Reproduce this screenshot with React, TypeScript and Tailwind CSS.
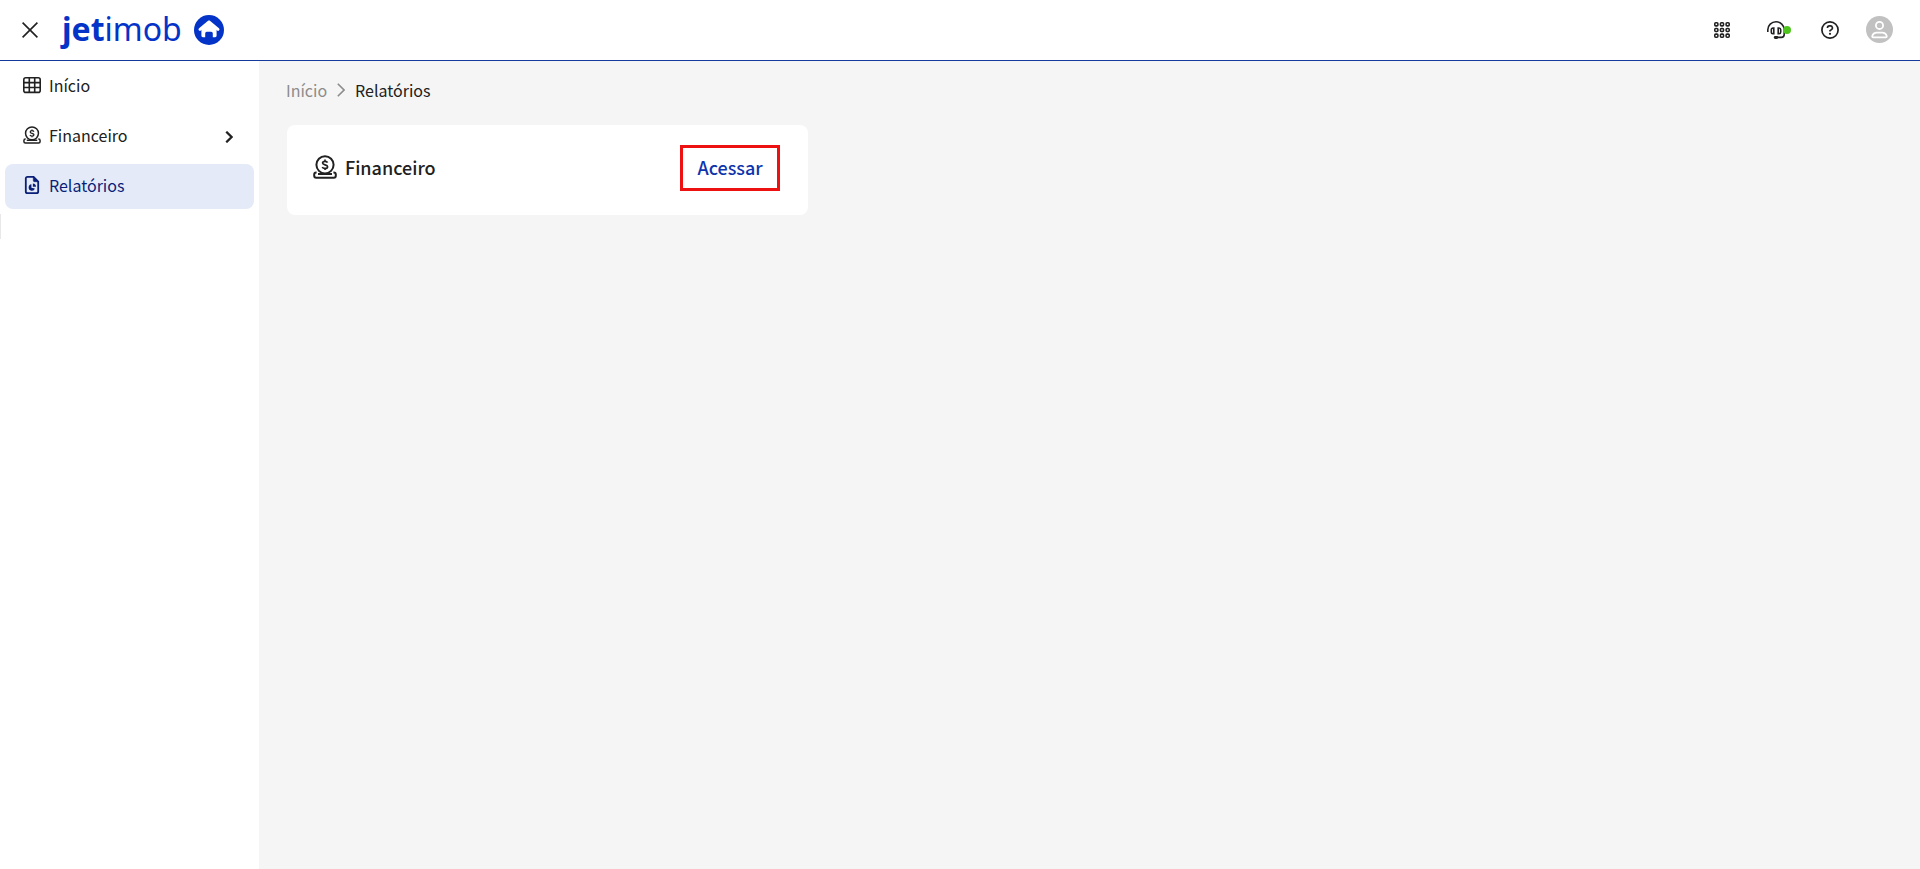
import type { ReactNode } from 'react';

interface IconProps {
  className?: string;
}

function CloseIcon({ className }: IconProps) {
  return (
    <svg viewBox="0 0 16 16" className={className} fill="none" stroke="currentColor" strokeWidth="1.6">
      <path d="M.6.6l14.8 14.8M15.4.6L.6 15.4" />
    </svg>
  );
}

function HouseBadge({ className }: IconProps) {
  return (
    <svg viewBox="0 0 30 30" className={className}>
      <circle cx="15" cy="15" r="15" fill="#0433c8" />
      <path
        d="M15 7L6 14.4M15 7l9 7.4"
        stroke="#fff"
        strokeWidth="3"
        strokeLinecap="round"
        strokeLinejoin="round"
      />
      <path
        d="M15 7l7.6 6.5v7.3q0 1.4-1.4 1.4h-2.4v-3.8q0-1.6-1.6-1.6h-4.4q-1.6 0-1.6 1.6v3.8H8.800q-1.400 0-1.400-1.400V13.500z"
        fill="#fff"
      />
    </svg>
  );
}

function AppsIcon({ className }: IconProps) {
  const steps = [2.4, 8.2, 14];
  return (
    <svg viewBox="0 0 16.4 16.4" className={className} fill="none" stroke="currentColor" strokeWidth="1.6">
      {steps.map((y) =>
        steps.map((x) => <rect key={`${x}-${y}`} x={x - 1.6} y={y - 1.6} width="3.2" height="3.2" rx="1" />)
      )}
    </svg>
  );
}

function HeadsetIcon({ className }: IconProps) {
  return (
    <svg viewBox="0 0 18 18" className={className} fill="none" stroke="currentColor" strokeWidth="1.6">
      <path d="M.8 11V8.8a8.2 8 0 0 1 16.4 0v4.8a2.8 2.8 0 0 1-2.8 2.8H9" />
      <path d="M6.8 7v5.8H6a1.7 1.7 0 0 1-1.7-1.7V8.7A1.7 1.7 0 0 1 6 7zM11.2 7v5.8h.8a1.7 1.7 0 0 0 1.7-1.7V8.7A1.7 1.7 0 0 0 12 7z" />
      <rect x="6.8" y="14.9" width="4.4" height="3" rx="1.4" fill="currentColor" stroke="none" />
    </svg>
  );
}

function HelpIcon({ className }: IconProps) {
  return (
    <svg viewBox="0 0 18 18" className={className} fill="none" stroke="currentColor" strokeWidth="1.7">
      <circle cx="9" cy="9" r="8.1" />
      <path d="M6.5 7V6.8a1.9 1.9 0 0 1 1.9-1.9h1.1a2 2 0 0 1 1 3.7L9 9.6v.9" />
      <circle cx="9" cy="12.8" r="1.1" fill="currentColor" stroke="none" />
    </svg>
  );
}

function AvatarIcon({ className }: IconProps) {
  return (
    <svg viewBox="0 0 27 27" className={className}>
      <circle cx="13.5" cy="13.5" r="13.5" fill="#c1c1c1" />
      <g fill="none" stroke="#fff" strokeWidth="1.8">
        <circle cx="13.5" cy="9.4" r="3.6" />
        <path d="M7.3 21.3h12.4c.8 0 1.2-.5 1-1.3-.6-2.1-2.4-3.4-4.6-3.4h-5.2c-2.2 0-4 1.3-4.6 3.4-.2.8.2 1.3 1 1.3z" />
      </g>
    </svg>
  );
}

function TableIcon({ className }: IconProps) {
  return (
    <svg viewBox="0 0 18 18" className={className} fill="none" stroke="currentColor" strokeWidth="1.6">
      <rect x=".8" y="1.8" width="16.4" height="14.6" rx="2" />
      <path d="M.8 6.6h16.4M.8 11.5h16.4M6.3 1.8v14.6M11.7 1.8v14.6" />
    </svg>
  );
}

function CoinIcon({ className }: IconProps) {
  return (
    <svg viewBox="0 0 24 24" className={className} fill="none" stroke="currentColor" strokeWidth="2">
      <circle cx="12" cy="9.8" r="8.6" />
      <path d="M3.6 17.4h-.4c-1.2 0-2 .9-2 2.1v1.3c0 1.2.8 2 2 2h17.6c1.2 0 2-.8 2-2v-1.3c0-1.2-.8-2.1-2-2.1h-.4M5 18.9h14" />
      <path
        d="M14.5 7.6c-.4-1-1.3-1.3-2.5-1.3-1.4 0-2.4.6-2.4 1.7 0 2.4 5 1.2 5 3.7 0 1.1-1 1.7-2.6 1.7-1.4 0-2.3-.4-2.7-1.4M12 4.6v1.7M12 13.4v1.7"
        strokeWidth="1.7"
      />
    </svg>
  );
}

function ReportIcon({ className }: IconProps) {
  return (
    <svg viewBox="0 0 18 18" className={className} fill="none" stroke="currentColor" strokeWidth="1.8">
      <path d="M10.6.9H4.5c-1 0-1.7.7-1.7 1.7v12.8c0 1 .7 1.7 1.7 1.7h9c1 0 1.7-.7 1.7-1.7V5.5z" />
      <path d="M10.3.9v3.5c0 .8.5 1.3 1.3 1.3h3.6z" fill="currentColor" strokeWidth=".6" />
      <path d="M8.4 8.3a3.2 3.2 0 1 0 3.5 4.1l-3.5-.6z" fill="currentColor" stroke="none" />
      <path d="M9.9 7.4a3.3 3.3 0 0 1 3.1 3.3H9.9z" fill="currentColor" stroke="none" />
    </svg>
  );
}

function Chevron({ className, weight }: IconProps & { weight: number }) {
  return (
    <svg viewBox="0 0 8 14" className={className} fill="none" stroke="currentColor" strokeWidth={weight}>
      <path d="M.8.8L7 7 .8 13.2" />
    </svg>
  );
}

interface MenuItemProps {
  icon: ReactNode;
  label: string;
  active?: boolean;
  expandable?: boolean;
}

function MenuItem({ icon, label, active = false, expandable = false }: MenuItemProps) {
  return (
    <li>
      <a
        href="#"
        aria-current={active ? 'page' : undefined}
        className={`flex h-[45px] items-center gap-2 rounded-lg pr-[21px] pb-1 pl-[18px] ${
          active ? 'bg-[#e4eaf8] text-[#0a1f78]' : 'text-[#212121]'
        }`}
      >
        {icon}
        <span className="flex-1">{label}</span>
        {expandable && <Chevron weight={2.6} className="mt-1 h-3 w-2" />}
      </a>
    </li>
  );
}

export default function App() {
  return (
    <div className="flex min-h-screen flex-col bg-[#f5f5f5] font-['Noto_Sans_CJK_SC','Noto_Sans',sans-serif] text-base leading-6 text-[#212121]">
      {/* Top bar */}
      <header className="flex h-[61px] items-center justify-between border-b border-[#143a9c] bg-white pr-[27px] pb-px pl-[22px]">
        <div className="flex items-center gap-6">
          <button type="button" aria-label="Fechar menu">
            <CloseIcon className="size-4" />
          </button>
          <a href="#" className="flex items-center gap-3 text-[#0433c8]">
            <span className="pb-[2px] font-['Noto_Sans',sans-serif] text-[32px] leading-10">
              <b>jet</b>imob
            </span>
            <HouseBadge className="size-[30px]" />
          </a>
        </div>

        <div className="flex items-center">
          <button type="button" aria-label="Aplicativos" className="mr-[37px]">
            <AppsIcon className="size-4" />
          </button>
          <button type="button" aria-label="Suporte" className="relative mr-[36px]">
            <HeadsetIcon className="size-[18px]" />
            <span className="absolute top-[5px] -right-1.5 size-2 rounded-full bg-[#4fc31e]" />
          </button>
          <button type="button" aria-label="Ajuda" className="mr-[27px]">
            <HelpIcon className="size-[18px]" />
          </button>
          <button type="button" aria-label="Perfil">
            <AvatarIcon className="size-[27px]" />
          </button>
        </div>
      </header>

      <div className="flex flex-1">
        {/* Sidebar */}
        <nav className="w-[259px] shrink-0 bg-white pt-[3px]">
          <ul className="flex flex-col gap-[5px] px-[5px]">
            <MenuItem icon={<TableIcon className="size-[18px]" />} label="Início" />
            <MenuItem icon={<CoinIcon className="size-[18px]" />} label="Financeiro" expandable />
            <MenuItem icon={<ReportIcon className="size-[18px]" />} label="Relatórios" active />
          </ul>
          <div className="mt-[5px] h-[25px] w-px bg-[#e8e8e8]" />
        </nav>

        {/* Content */}
        <main className="flex-1 px-[27px] pt-[17px]">
          <nav aria-label="Breadcrumb" className="flex items-center gap-[10px]">
            <a href="#" className="text-[#8c8c8c]">
              Início
            </a>
            <Chevron weight={1.6} className="h-[14px] w-2 text-[#8c8c8c]" />
            <span>Relatórios</span>
          </nav>

          <div className="mt-[23px] grid grid-cols-3 gap-[22px] pl-px">
            <section className="flex h-[90px] items-center justify-between rounded-lg bg-white pr-7 pb-1 pl-[26px]">
              <h2 className="flex items-center gap-2 pb-[2px] text-[18px] font-medium">
                <CoinIcon className="size-6" />
                Financeiro
              </h2>
              <a
                href="#"
                className="flex h-[46px] items-center border-3 border-[#ee1111] px-[14px] pb-[2px] text-[18px] font-medium text-[#0f35ae]"
              >
                Acessar
              </a>
            </section>
          </div>
        </main>
      </div>
    </div>
  );
}
